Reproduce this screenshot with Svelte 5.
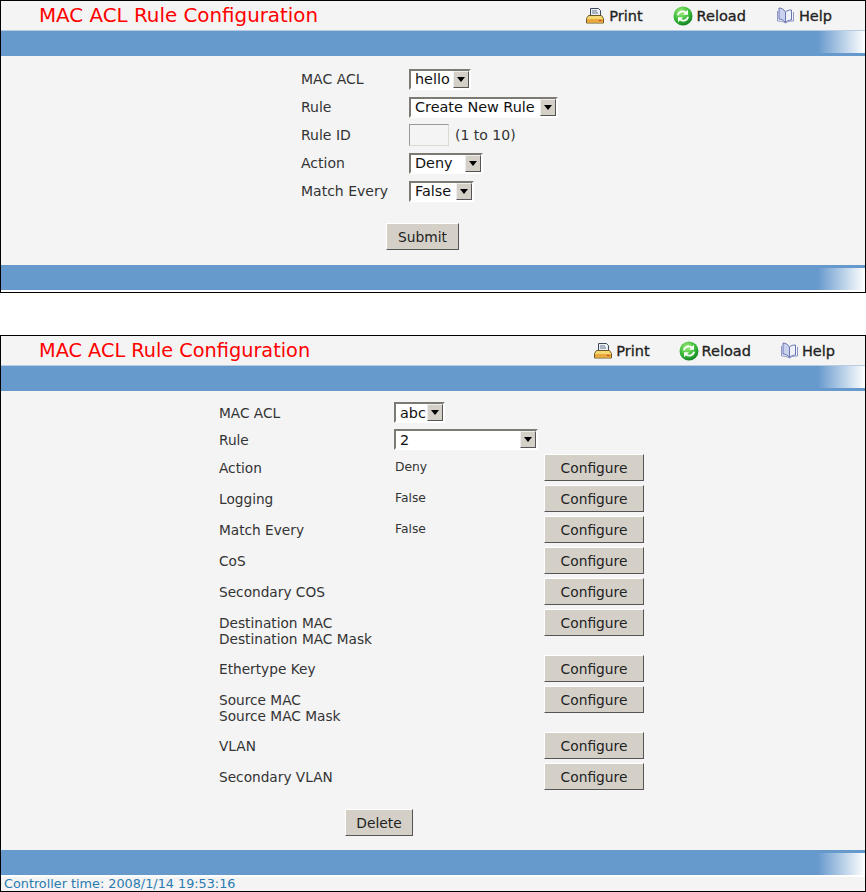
<script>
  const topRows = [
    { label: 'MAC ACL', kind: 'select', value: 'hello', width: 62 },
    { label: 'Rule', kind: 'select', value: 'Create New Rule', width: 149 },
    { label: 'Rule ID', kind: 'input' },
    { label: 'Action', kind: 'select', value: 'Deny', width: 74 },
    { label: 'Match Every', kind: 'select', value: 'False', width: 65 }
  ];
  const lowerRows = [
    { label: ['Action'], value: 'Deny', h: 31 },
    { label: ['Logging'], value: 'False', h: 31 },
    { label: ['Match Every'], value: 'False', h: 31 },
    { label: ['CoS'], h: 31 },
    { label: ['Secondary COS'], h: 31 },
    { label: ['Destination MAC', 'Destination MAC Mask'], h: 46 },
    { label: ['Ethertype Key'], h: 31 },
    { label: ['Source MAC', 'Source MAC Mask'], h: 46 },
    { label: ['VLAN'], h: 31 },
    { label: ['Secondary VLAN'], h: 31 }
  ];
</script>

{#snippet dropdown(value, width)}
  <span class="select" style="width:{width}px">
    <select aria-label={value}><option>{value}</option></select>
    <span class="arrow">
      <svg width="8" height="5" viewBox="0 0 8 5"><path d="M0 0h8L4 5z" fill="#000" /></svg>
    </span>
  </span>
{/snippet}

{#snippet tools()}
  <span class="tool">
    <svg width="20" height="18" viewBox="0 0 20 18">
      <path d="M5.500 1.500h8l2 2v6h-10z" fill="#e8eef4" stroke="#3a4a5c" />
      <path d="M7 4h5M7 6h6" stroke="#6a7a8c" />
      <path d="M3.500 8.500h13l2 3v4.500h-17v-4.500z" fill="#f6d873" stroke="#6e5a28" />
      <path d="M2 12h16v3.500H2z" fill="#e9a93c" />
      <path d="M14 13.500h2.500" stroke="#c0392b" />
    </svg>
    Print
  </span>
  <span class="tool">
    <svg width="20" height="20" viewBox="0 0 20 20">
      <defs>
        <radialGradient id="g" cx="40%" cy="30%" r="75%">
          <stop offset="0" stop-color="#a6ee80" />
          <stop offset="0.6" stop-color="#35b835" />
          <stop offset="1" stop-color="#0d7a22" />
        </radialGradient>
      </defs>
      <circle cx="10" cy="10" r="9.500" fill="url(#g)" />
      <path d="M4.800 9.200a5 5 0 0 1 8-2.700" fill="none" stroke="#fff" stroke-width="1.800" />
      <path d="M15 3.800v5h-5z" fill="#fff" />
      <path d="M15.200 10.800a5 5 0 0 1-8 2.700" fill="none" stroke="#fff" stroke-width="1.800" />
      <path d="M5 16.200v-5h5z" fill="#fff" />
    </svg>
    Reload
  </span>
  <span class="tool">
    <svg width="19" height="17" viewBox="0 0 18 17">
      <path d="M9 5C7.500 2.500 5 1 2.500 1v11c2.500 0 5 1.500 6.500 3.500z" fill="#c9d3ee" stroke="#6a74b0" />
      <path d="M9 5c1.500-1.500 3.500-2 6-2v10c-2.500 0-4.500 1-6 2.500z" fill="#eef1fa" stroke="#6a74b0" />
      <path d="M1 4v10c3 0 6 .5 8 2 2-1.500 4-2 8-2V5" fill="none" stroke="#8d96c8" />
    </svg>
    Help
  </span>
{/snippet}

<main class="page">
  <section class="panel first">
    <header class="head">
      <h1>MAC ACL Rule Configuration</h1>
      <nav class="tools">{@render tools()}</nav>
    </header>
    <div class="bar"></div>
    <div class="content top-form">
      {#each topRows as row}
        <div class="top-row">
          <span class="label">{row.label}</span>
          {#if row.kind === 'select'}
            {@render dropdown(row.value, row.width)}
          {:else}
            <span class="field"><input aria-label="Rule ID" /> (1 to 10)</span>
          {/if}
        </div>
      {/each}
      <button class="btn submit">Submit</button>
    </div>
    <div class="bar bottom"></div>
  </section>

  <section class="panel second">
    <header class="head">
      <h1>MAC ACL Rule Configuration</h1>
      <nav class="tools">{@render tools()}</nav>
    </header>
    <div class="bar"></div>
    <div class="content lower-form">
      <div class="low-top">
        <span class="label">MAC ACL</span>
        {@render dropdown('abc', 51)}
      </div>
      <div class="low-top">
        <span class="label">Rule</span>
        {@render dropdown('2', 144)}
      </div>
      {#each lowerRows as row}
        <div class="low-row" style="height:{row.h}px">
          <span class="label">
            {#each row.label as line}<span class="line">{line}</span>{/each}
          </span>
          <span class="value">{row.value ?? ''}</span>
          <button class="btn cfg">Configure</button>
        </div>
      {/each}
      <button class="btn del">Delete</button>
    </div>
    <div class="bar bottom"></div>
    <footer>Controller time: 2008/1/14 19:53:16</footer>
  </section>
</main>

<style>
  :global(body) {
    margin: 0;
    background: #fff;
    font-family: "DejaVu Sans", Verdana, sans-serif;
    color: #333;
  }
  .page {
    width: 866px;
    height: 892px;
    display: flex;
    flex-direction: column;
    gap: 42px;
    overflow: hidden;
  }
  .panel {
    box-sizing: border-box;
    border: 1px solid #000;
    background: #f4f4f4;
    display: flex;
    flex-direction: column;
  }
  .first { height: 293px; }
  .second { height: 557px; }
  .head {
    height: 29px;
    display: flex;
    align-items: center;
    justify-content: space-between;
    flex: none;
  }
  h1 {
    margin: 0 0 0 38px;
    font-weight: 400;
    color: #f00;
    white-space: nowrap;
  }
  .first h1 { font-size: 19.850px; }
  .second h1 { font-size: 19.300px; }
  .tools {
    display: flex;
    font-size: 14.500px;
    color: #222;
    -webkit-text-stroke: 0.3px #222;
  }
  .first .tools { margin-right: 33px; gap: 30px; }
  .second .tools { margin-right: 30px; gap: 29px; }
  .tool { display: inline-flex; align-items: center; gap: 3px; }
  .first .tool { gap: 4px; }
  .bar {
    flex: none;
    height: 22px;
    border-top: 1px solid #b9cde2;
    background: linear-gradient(90deg, #6699cc 0, #6699cc 94.500%, #fff 100%);
    border-bottom: 3px solid #6699cc;
  }
  .bar.bottom {
    border-top: 3px solid #6699cc;
    border-bottom: 2px solid #fff;
  }
  .content { flex: 1; }
  .first .content { font-size: 14px; }
  .second .content { font-size: 13.700px; }
  .label { display: block; }
  .line { display: block; line-height: 15.500px; }

  .top-form { padding: 9px 0 0 300px; }
  .top-row {
    display: grid;
    grid-template-columns: 108px auto;
    align-items: center;
    height: 28px;
    justify-items: start;
  }

  .field { display: inline-flex; align-items: center; gap: 6px; }
  input {
    box-sizing: border-box;
    width: 40px;
    height: 22px;
    margin: 0;
    border: 1px solid;
    border-color: #9c9a94 #dcd9d2 #dcd9d2 #9c9a94;
    background: #f4f4f4;
  }
  .select {
    position: relative;
    display: inline-block;
    height: 21px;
    box-sizing: border-box;
    border: 2px solid;
    border-color: #7d7a73 #fff #fff #7d7a73;
    background: #fff;
  }
  select {
    appearance: none;
    width: 100%;
    height: 100%;
    display: block;
    border: 0;
    padding: 0 0 0 4px;
    background: transparent;
    font: inherit;
    font-size: 14.400px;
    color: #111;
  }
  .arrow {
    position: absolute;
    right: 0;
    top: 0;
    bottom: 0;
    width: 16px;
    background: #d4d0c8;
    border: 1px solid;
    border-color: #eee #555 #555 #eee;
    box-sizing: border-box;
    display: flex;
    align-items: center;
    justify-content: center;
  }

  .lower-form { padding: 8px 0 0 218px; }
  .low-top {
    display: grid;
    grid-template-columns: 175px auto;
    align-items: center;
    justify-items: start;
    height: 27px;
  }
  .low-top:nth-child(2) { margin-bottom: 1px; }
  .low-row {
    display: grid;
    grid-template-columns: 175px 150px auto;
    align-items: start;
  }
  .low-row .label { padding-top: 7px; }
  .low-row .value { padding-top: 6px; }
  .value { font-size: 12.300px; color: #333; padding-left: 1px; }
  .btn {
    box-sizing: border-box;
    margin: 0;
    padding: 0;
    border: 1px solid;
    border-color: #fff #555 #555 #fff;
    background: #d4d0c8;
    font: inherit;
    font-size: 13.800px;
    color: #222;
  }
  .cfg { width: 100px; height: 27px; }
  .submit { display: block; width: 73px; height: 27px; margin: 18px 0 0 85px; }
  .del { display: block; width: 68px; height: 27px; margin: 15px 0 0 126px; }
  footer {
    font-size: 12.800px;
    color: #2a7ab0;
    padding-left: 3px;
    line-height: 14px;
    height: 14px;
    flex: none;
  }
</style>
